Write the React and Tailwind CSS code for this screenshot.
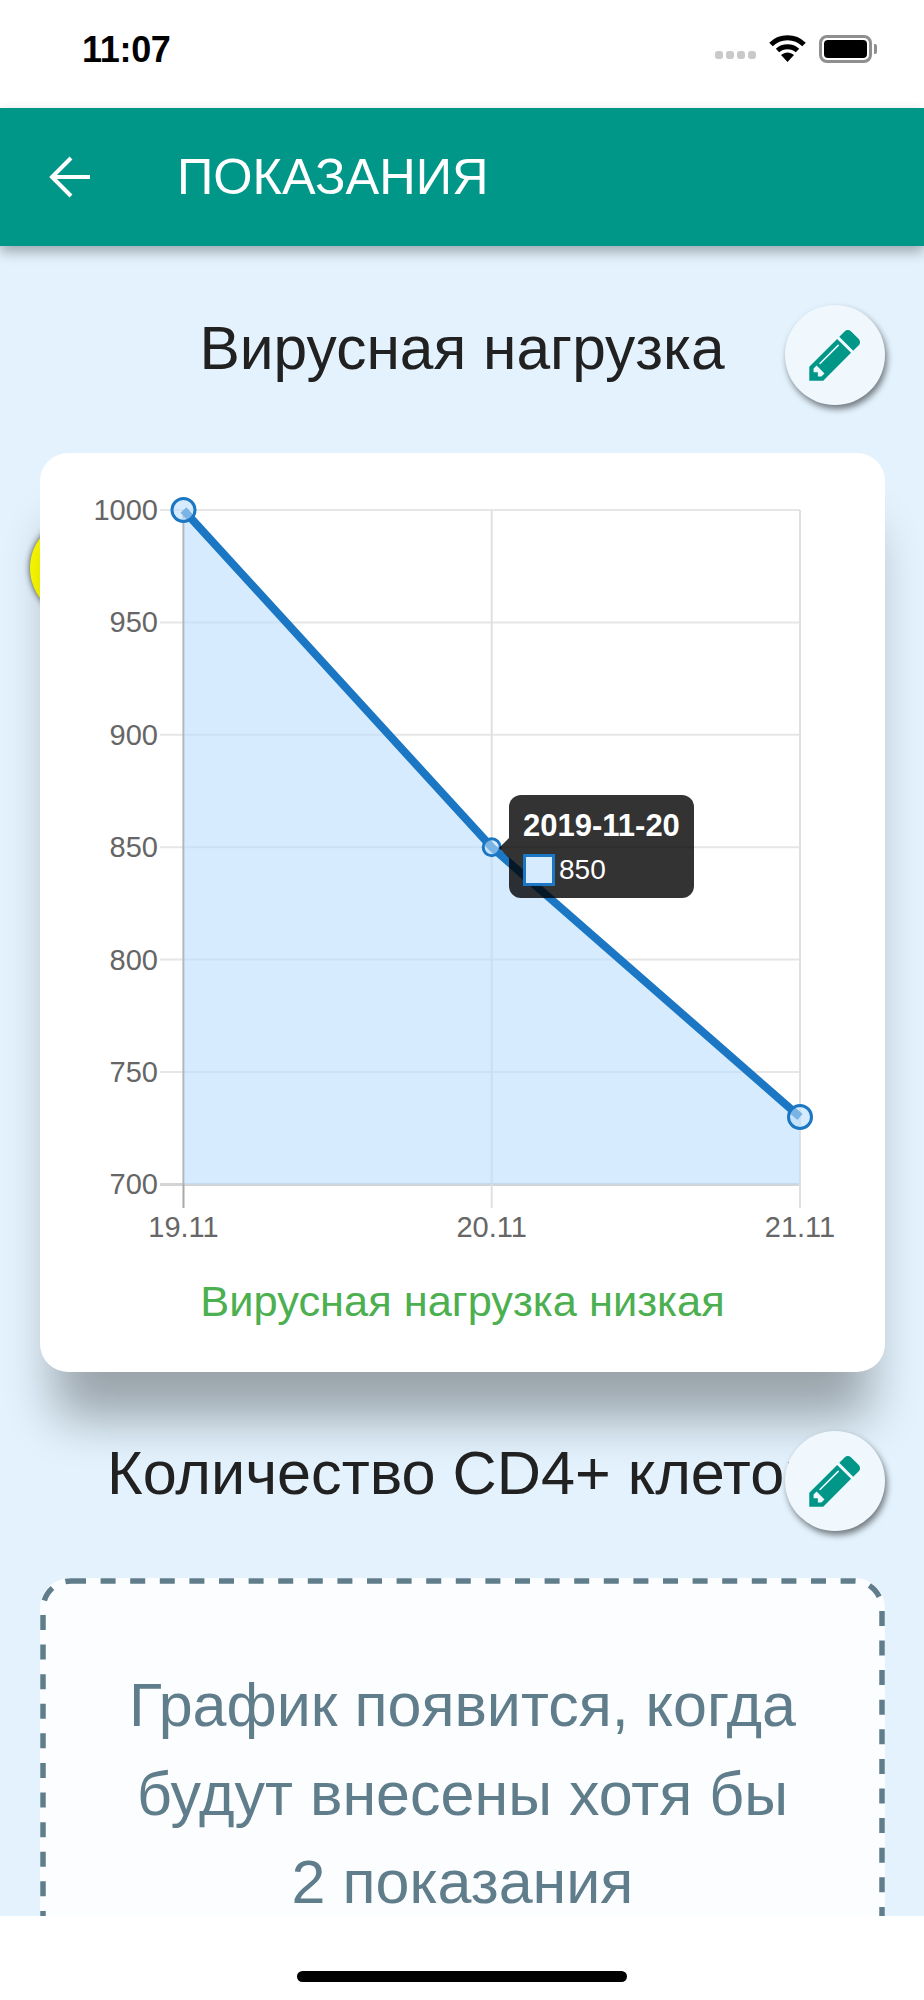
import React from "react";

const PENCIL =
  "M491 1536l91-91-235-235-91 91v107h128v128h107zm523-928q0-22-22-22-10 0-17 7l-542 542q-7 7-7 17 0 22 22 22 10 0 17-7l542-542q7-7 7-17zm-54-192l416 416-832 832h-416v-416zm683 96q0 53-37 90l-166 166-416-416 166-165q36-38 90-38 53 0 91 38l235 234q37 39 37 91z";

const yTicks = [
  { label: "1000", y: 510 },
  { label: "950", y: 622.4 },
  { label: "900", y: 734.8 },
  { label: "850", y: 847.2 },
  { label: "800", y: 959.6 },
  { label: "750", y: 1072 },
  { label: "700", y: 1184.4 },
];

const xTicks = [
  { label: "19.11", x: 183.5 },
  { label: "20.11", x: 491.7 },
  { label: "21.11", x: 800 },
];

const EditButton = () => (
  <button className="absolute right-[39px] top-0 flex h-[100px] w-[100px] items-center justify-center rounded-full bg-[#f0f8fe] shadow-[2px_4px_6px_rgba(0,0,0,0.5)]">
    <svg width="60" height="60" viewBox="0 0 1792 1792" fill="#009688">
      <path d={PENCIL} />
    </svg>
  </button>
);

const StatusBar = () => (
  <div className="flex h-[108px] items-start justify-between bg-white pl-[82px] pr-[47px] pt-[35px]">
    <span className="pt-[1px] text-[36px] font-bold leading-[28px] tracking-[-0.3px] text-black">11:07</span>
    <div className="flex items-center">
      <div className="mt-[12px] flex gap-[3px]">
        <span className="h-[8px] w-[8px] rounded-[3px] bg-[#c9c9c9]" />
        <span className="h-[8px] w-[8px] rounded-[3px] bg-[#c9c9c9]" />
        <span className="h-[8px] w-[8px] rounded-[3px] bg-[#c9c9c9]" />
        <span className="h-[8px] w-[8px] rounded-[3px] bg-[#c9c9c9]" />
      </div>
      <svg className="ml-[13px]" width="37" height="28" viewBox="0 0 37 28" fill="none" stroke="#000" strokeWidth="5">
        <path d="M2 9.5 C11 0.5 26 0.5 35 9.5" />
        <path d="M8.5 15.5 C14 10.5 23 10.5 28.5 15.5" />
        <path d="M12 20 L18.5 27 L25 20 C21 16.5 16 16.5 12 20 Z" fill="#000" stroke="none" />
      </svg>
      <div className="ml-[13px] flex items-center">
        <div className="h-[28px] w-[53px] rounded-[8px] border-[3px] border-[#8f8f8f] p-[2px]">
          <div className="h-full w-full rounded-[4px] bg-black" />
        </div>
        <div className="ml-[2px] h-[10px] w-[3px] rounded-r-[2px] bg-[#8f8f8f]" />
      </div>
    </div>
  </div>
);

const Chart = () => (
  <svg width="845" height="800" viewBox="40 453 845 800" className="block" fontSize="29" fill="#666">
    {yTicks.map((t) => (
      <line key={t.label} x1="160" x2="800" y1={t.y} y2={t.y} stroke={t.label === "700" ? "#d4d4d4" : "#e6e6e6"} strokeWidth={t.label === "700" ? 3 : 2} />
    ))}
    {xTicks.map((t, i) => (
      <line key={t.label} x1={t.x} x2={t.x} y1="510" y2="1208" stroke={i === 0 ? "#a8a8a8" : "#e0e0e0"} strokeWidth="2" />
    ))}
    <path d="M183.5 510 L491.7 847.2 L800 1117 L800 1184.4 L183.5 1184.4 Z" fill="rgba(187,222,251,0.6)" />
    <path d="M183.5 510 L491.7 847.2 L800 1117" fill="none" stroke="#1b77c3" strokeWidth="8" />
    <circle cx="183.5" cy="510" r="11.5" fill="rgba(187,222,251,0.6)" stroke="#1b77c3" strokeWidth="3" />
    <circle cx="491.7" cy="847.2" r="8.5" fill="rgba(187,222,251,0.6)" stroke="#1b77c3" strokeWidth="3" />
    <circle cx="800" cy="1117" r="11.5" fill="rgba(187,222,251,0.6)" stroke="#1b77c3" strokeWidth="3" />
    {yTicks.map((t) => (
      <text key={t.label} x="158" y={t.y + 10} textAnchor="end">
        {t.label}
      </text>
    ))}
    {xTicks.map((t) => (
      <text key={t.label} x={t.x} y="1237" textAnchor="middle">
        {t.label}
      </text>
    ))}
  </svg>
);

const App = () => {
  return (
    <div className="flex h-[2000px] w-[924px] flex-col overflow-hidden bg-white font-['Liberation_Sans',Arial,sans-serif]">
      <StatusBar />

      <header className="relative z-10 flex h-[138px] items-center bg-[#009688] shadow-[0_6px_12px_rgba(0,0,0,0.3)]">
        <svg className="ml-[49px]" width="42" height="42" viewBox="0 0 42 42" fill="none" stroke="#fff" strokeWidth="4">
          <path d="M3 21 H41" />
          <path d="M22 2 L3 21 L22 40" />
        </svg>
        <h1 className="ml-[86px] text-[50.5px] leading-none text-white">ПОКАЗАНИЯ</h1>
      </header>

      <main className="relative flex-1 overflow-hidden bg-[#e3f2fd] pt-[59px]">
        {/* yellow marker sitting behind the card */}
        <div className="absolute left-[30px] top-[272px] h-[100px] w-[100px] rounded-full bg-[#ffff00] shadow-[0_0_6px_rgba(0,0,0,0.7)]" />

        <div className="relative mb-[48px] flex h-[100px] items-center justify-center pb-[14px]">
          <h2 className="whitespace-nowrap text-[60.5px] leading-none text-[#212121]">Вирусная нагрузка</h2>
          <EditButton />
        </div>

        <div className="relative mx-[40px] h-[919px] w-[845px] rounded-[28px] bg-white shadow-[0_60px_50px_-15px_rgba(0,0,0,0.33)]">
          <Chart />
          <div className="absolute left-[469px] top-[342px] h-[103px] w-[185px] rounded-[12px] bg-black/80 pl-[14px] pt-[13px] text-white">
            <span className="absolute left-[-10px] top-[43px] h-0 w-0 border-y-[10px] border-r-[10px] border-y-transparent border-r-black/80" />
            <div className="text-[31px] font-bold leading-[36px]">2019-11-20</div>
            <div className="mt-[10px] flex items-center text-[28px] leading-[32px]">
              <span className="h-[32px] w-[32px] border-[3px] border-[#1b77c3] bg-[#d6ebfd]" />
              <span className="ml-[4px]">850</span>
            </div>
          </div>
          <p className="mt-[27px] text-center text-[43.4px] leading-none text-[#4caf50]">Вирусная нагрузка низкая</p>
        </div>

        <div className="relative mb-[47px] mt-[59px] flex h-[100px] items-center justify-center pb-[14px] pr-[6px]">
          <h2 className="whitespace-nowrap text-[61.2px] leading-none text-[#212121]">Количество CD4+ клеток</h2>
          <EditButton />
        </div>

        <div className="relative mx-[40px] h-[600px] w-[845px] rounded-[30px] bg-[#fcfdff] pt-[83px] text-center text-[61px] leading-[88.5px] text-[#607d8b]">
          <svg className="absolute left-0 top-0" width="845" height="600" fill="none">
            <rect x="3" y="3" width="839" height="594" rx="28" stroke="#607d8b" strokeWidth="5.5" strokeDasharray="15 14.6" />
          </svg>
          <p>График появится, когда</p>
          <p>будут внесены хотя бы</p>
          <p>2 показания</p>
        </div>
      </main>

      <div className="flex h-[84px] items-start justify-center bg-white pt-[55px]">
        <div className="h-[11px] w-[330px] rounded-full bg-black" />
      </div>
    </div>
  );
};

export default App;
